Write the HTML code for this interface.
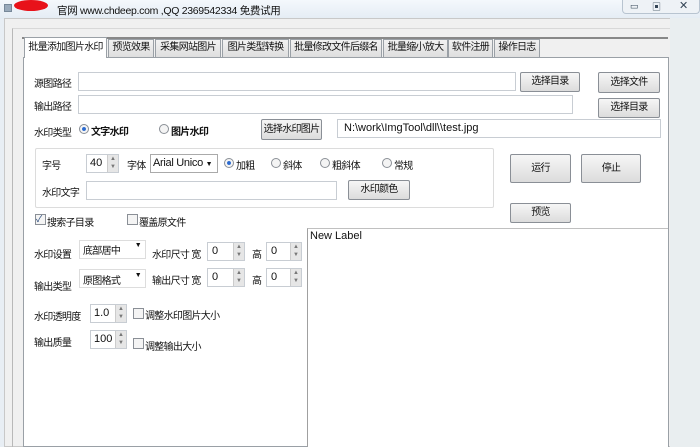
<!DOCTYPE html>
<html><head><meta charset="utf-8"><style>
*{margin:0;padding:0;box-sizing:border-box}
body{width:700px;height:447px;overflow:hidden;position:relative;background:#e8eef4;font-family:"Liberation Sans","Noto Sans CJK SC",sans-serif;font-size:10px;letter-spacing:-0.7px;color:#111}
.a{position:absolute;white-space:nowrap}
.l{font-size:11px;letter-spacing:0}
.inp{position:absolute;background:#fff;border:1px solid #c8cdd3;white-space:nowrap}
.btn{position:absolute;border:1px solid #8a8f96;border-radius:2px;background:linear-gradient(#f6f6f6,#dcdcdc);text-align:center;white-space:nowrap}
.tab{position:absolute;top:39px;height:18px;border:1px solid #9aa0a6;border-bottom:none;background:linear-gradient(#f2f2f2,#dedede);text-align:center;line-height:16px;white-space:nowrap;overflow:hidden}
.rad{position:absolute;width:10px;height:10px;border:1px solid #8a8f96;border-radius:50%;background:#f4f4f4}
.chk{position:absolute;width:11px;height:11px;border:1px solid #8a8f96;background:#f4f4f4}
.spin{position:absolute;width:11px;background:#e6e6e6;border-left:1px solid #ccc;right:0;top:0;bottom:0;font-size:6px;color:#777;text-align:center;line-height:8px;letter-spacing:0}
</style></head><body>
<div class="a" style="left:0;top:0;width:700px;height:19px;background:linear-gradient(#f4f8fc,#e4ecf4)"></div>
<div class="a" style="left:4px;top:4px;width:8px;height:8px;background:#9ab;border:1px solid #789"></div>
<div class="a" style="left:14px;top:0px;width:34px;height:11px;background:#e8121a;border-radius:50%"></div>
<div class="a" style="left:57px;top:3px;font-size:10.5px;letter-spacing:-0.3px">官网 www.chdeep.com ,QQ 2369542334 免费试用</div>
<div class="a" style="left:622px;top:0;width:78px;height:14px;border:1px solid #b8c4d0;border-top:none;border-radius:0 0 4px 4px;background:#eef2f6"></div>
<div class="a" style="left:630px;top:1px;font-size:9px;color:#345">▭</div>
<div class="a" style="left:652px;top:0px;font-size:9px;color:#345">▣</div>
<div class="a" style="left:679px;top:-1px;font-size:11px;color:#345">✕</div>
<div class="a" style="left:4px;top:18px;width:667px;height:429px;background:#f0f0f0;border:1px solid #c8c8c8"></div>
<div class="a" style="left:12px;top:28px;width:658px;height:419px;border-left:1px solid #b8b8b8;border-top:1px solid #d8d8d8"></div>
<div class="a" style="left:670px;top:18px;width:30px;height:429px;background:#e9eef0"></div>
<div class="a" style="left:22px;top:37px;width:646px;height:2px;background:#888"></div>
<div class="a" style="left:23px;top:57px;width:646px;height:390px;background:#fff;border:1px solid #9aa0a6"></div>
<div class="tab" style="left:24px;top:37px;height:21px;width:83px;background:#fff;line-height:20px">批量添加图片水印</div>
<div class="tab" style="left:108px;width:46px">预览效果</div>
<div class="tab" style="left:155px;width:66px">采集网站图片</div>
<div class="tab" style="left:222px;width:67px">图片类型转换</div>
<div class="tab" style="left:290px;width:92px">批量修改文件后缀名</div>
<div class="tab" style="left:383px;width:65px">批量缩小放大</div>
<div class="tab" style="left:448px;width:45px">软件注册</div>
<div class="tab" style="left:494px;width:46px">操作日志</div>

<div class="a" style="left:34px;top:75px">源图路径</div>
<div class="inp" style="left:78px;top:72px;width:438px;height:19px"></div>
<div class="btn" style="left:520px;top:72px;width:60px;height:20px;line-height:18px">选择目录</div>
<div class="btn" style="left:598px;top:72px;width:62px;height:21px;line-height:19px">选择文件</div>
<div class="a" style="left:34px;top:98px">输出路径</div>
<div class="inp" style="left:78px;top:95px;width:495px;height:19px"></div>
<div class="btn" style="left:598px;top:98px;width:62px;height:20px;line-height:18px">选择目录</div>
<div class="a" style="left:34px;top:124px">水印类型</div>
<div class="rad" style="left:79px;top:124px;background:radial-gradient(#2a6ad0 30%,#f4f4f4 40%)"></div>
<div class="a" style="left:91px;top:123px;font-weight:bold">文字水印</div>
<div class="rad" style="left:159px;top:124px"></div>
<div class="a" style="left:171px;top:123px;font-weight:bold">图片水印</div>
<div class="btn" style="left:261px;top:119px;width:61px;height:21px;line-height:19px">选择水印图片</div>
<div class="inp l" style="left:337px;top:119px;width:324px;height:19px;padding:2px 6px">N:\work\ImgTool\dll\\test.jpg</div>

<div class="a" style="left:35px;top:148px;width:459px;height:60px;border:1px solid #dcdcdc;border-radius:2px"></div>
<div class="a" style="left:42px;top:157px">字号</div>
<div class="inp l" style="left:86px;top:154px;width:33px;height:19px;padding:2px 3px">40<div class="spin">▲<br>▼</div></div>
<div class="a" style="left:127px;top:157px">字体</div>
<div class="inp l" style="left:150px;top:154px;width:68px;height:19px;padding:2px 2px;border-color:#aaa;letter-spacing:-0.3px">Arial Unico <span style="font-size:7px">▼</span></div>
<div class="rad" style="left:224px;top:158px;background:radial-gradient(#2a6ad0 30%,#f4f4f4 40%)"></div>
<div class="a" style="left:236px;top:157px">加粗</div>
<div class="rad" style="left:271px;top:158px"></div><div class="a" style="left:283px;top:157px">斜体</div>
<div class="rad" style="left:320px;top:158px"></div><div class="a" style="left:332px;top:157px">粗斜体</div>
<div class="rad" style="left:382px;top:158px"></div><div class="a" style="left:394px;top:157px">常规</div>
<div class="a" style="left:42px;top:184px">水印文字</div>
<div class="inp" style="left:86px;top:181px;width:251px;height:19px"></div>
<div class="btn" style="left:348px;top:180px;width:62px;height:20px;line-height:18px">水印颜色</div>

<div class="btn" style="left:510px;top:154px;width:61px;height:29px;line-height:27px">运行</div>
<div class="btn" style="left:581px;top:154px;width:60px;height:29px;line-height:27px">停止</div>
<div class="btn" style="left:510px;top:203px;width:61px;height:20px;line-height:18px">预览</div>

<div class="chk" style="left:35px;top:214px;font-size:9px;line-height:9px;color:#247">✓</div>
<div class="a" style="left:47px;top:214px">搜索子目录</div>
<div class="chk" style="left:127px;top:214px"></div>
<div class="a" style="left:139px;top:214px">覆盖原文件</div>

<div class="a" style="left:307px;top:228px;width:361px;height:219px;border-left:1px solid #a0a0a0;border-top:1px solid #c0c0c0;background:#fff"></div>
<div class="a l" style="left:310px;top:230px">New Label</div>

<div class="a" style="left:34px;top:246px">水印设置</div>
<div class="inp" style="left:79px;top:240px;width:67px;height:19px;padding:1px 3px;border-color:#ddd">底部居中 <span style="position:absolute;right:4px;font-size:7px">▼</span></div>
<div class="a" style="left:152px;top:246px">水印尺寸 宽</div>
<div class="inp l" style="left:207px;top:242px;width:38px;height:19px;padding:2px 4px">0<div class="spin">▲<br>▼</div></div>
<div class="a" style="left:252px;top:246px">高</div>
<div class="inp l" style="left:266px;top:242px;width:36px;height:19px;padding:2px 4px">0<div class="spin">▲<br>▼</div></div>
<div class="a" style="left:34px;top:278px">输出类型</div>
<div class="inp" style="left:79px;top:269px;width:67px;height:19px;padding:2px 3px;border-color:#ddd">原图格式 <span style="position:absolute;right:4px;font-size:7px">▼</span></div>
<div class="a" style="left:152px;top:272px">输出尺寸 宽</div>
<div class="inp l" style="left:207px;top:268px;width:38px;height:19px;padding:2px 4px">0<div class="spin">▲<br>▼</div></div>
<div class="a" style="left:252px;top:272px">高</div>
<div class="inp l" style="left:266px;top:268px;width:36px;height:19px;padding:2px 4px">0<div class="spin">▲<br>▼</div></div>

<div class="a" style="left:34px;top:308px">水印透明度</div>
<div class="inp l" style="left:90px;top:304px;width:37px;height:19px;padding:2px 3px">1.0<div class="spin">▲<br>▼</div></div>
<div class="chk" style="left:133px;top:308px"></div>
<div class="a" style="left:145px;top:307px">调整水印图片大小</div>
<div class="a" style="left:34px;top:334px">输出质量</div>
<div class="inp l" style="left:90px;top:330px;width:37px;height:19px;padding:2px 3px">100<div class="spin">▲<br>▼</div></div>
<div class="chk" style="left:133px;top:338px"></div>
<div class="a" style="left:145px;top:338px">调整输出大小</div>
</body></html>
